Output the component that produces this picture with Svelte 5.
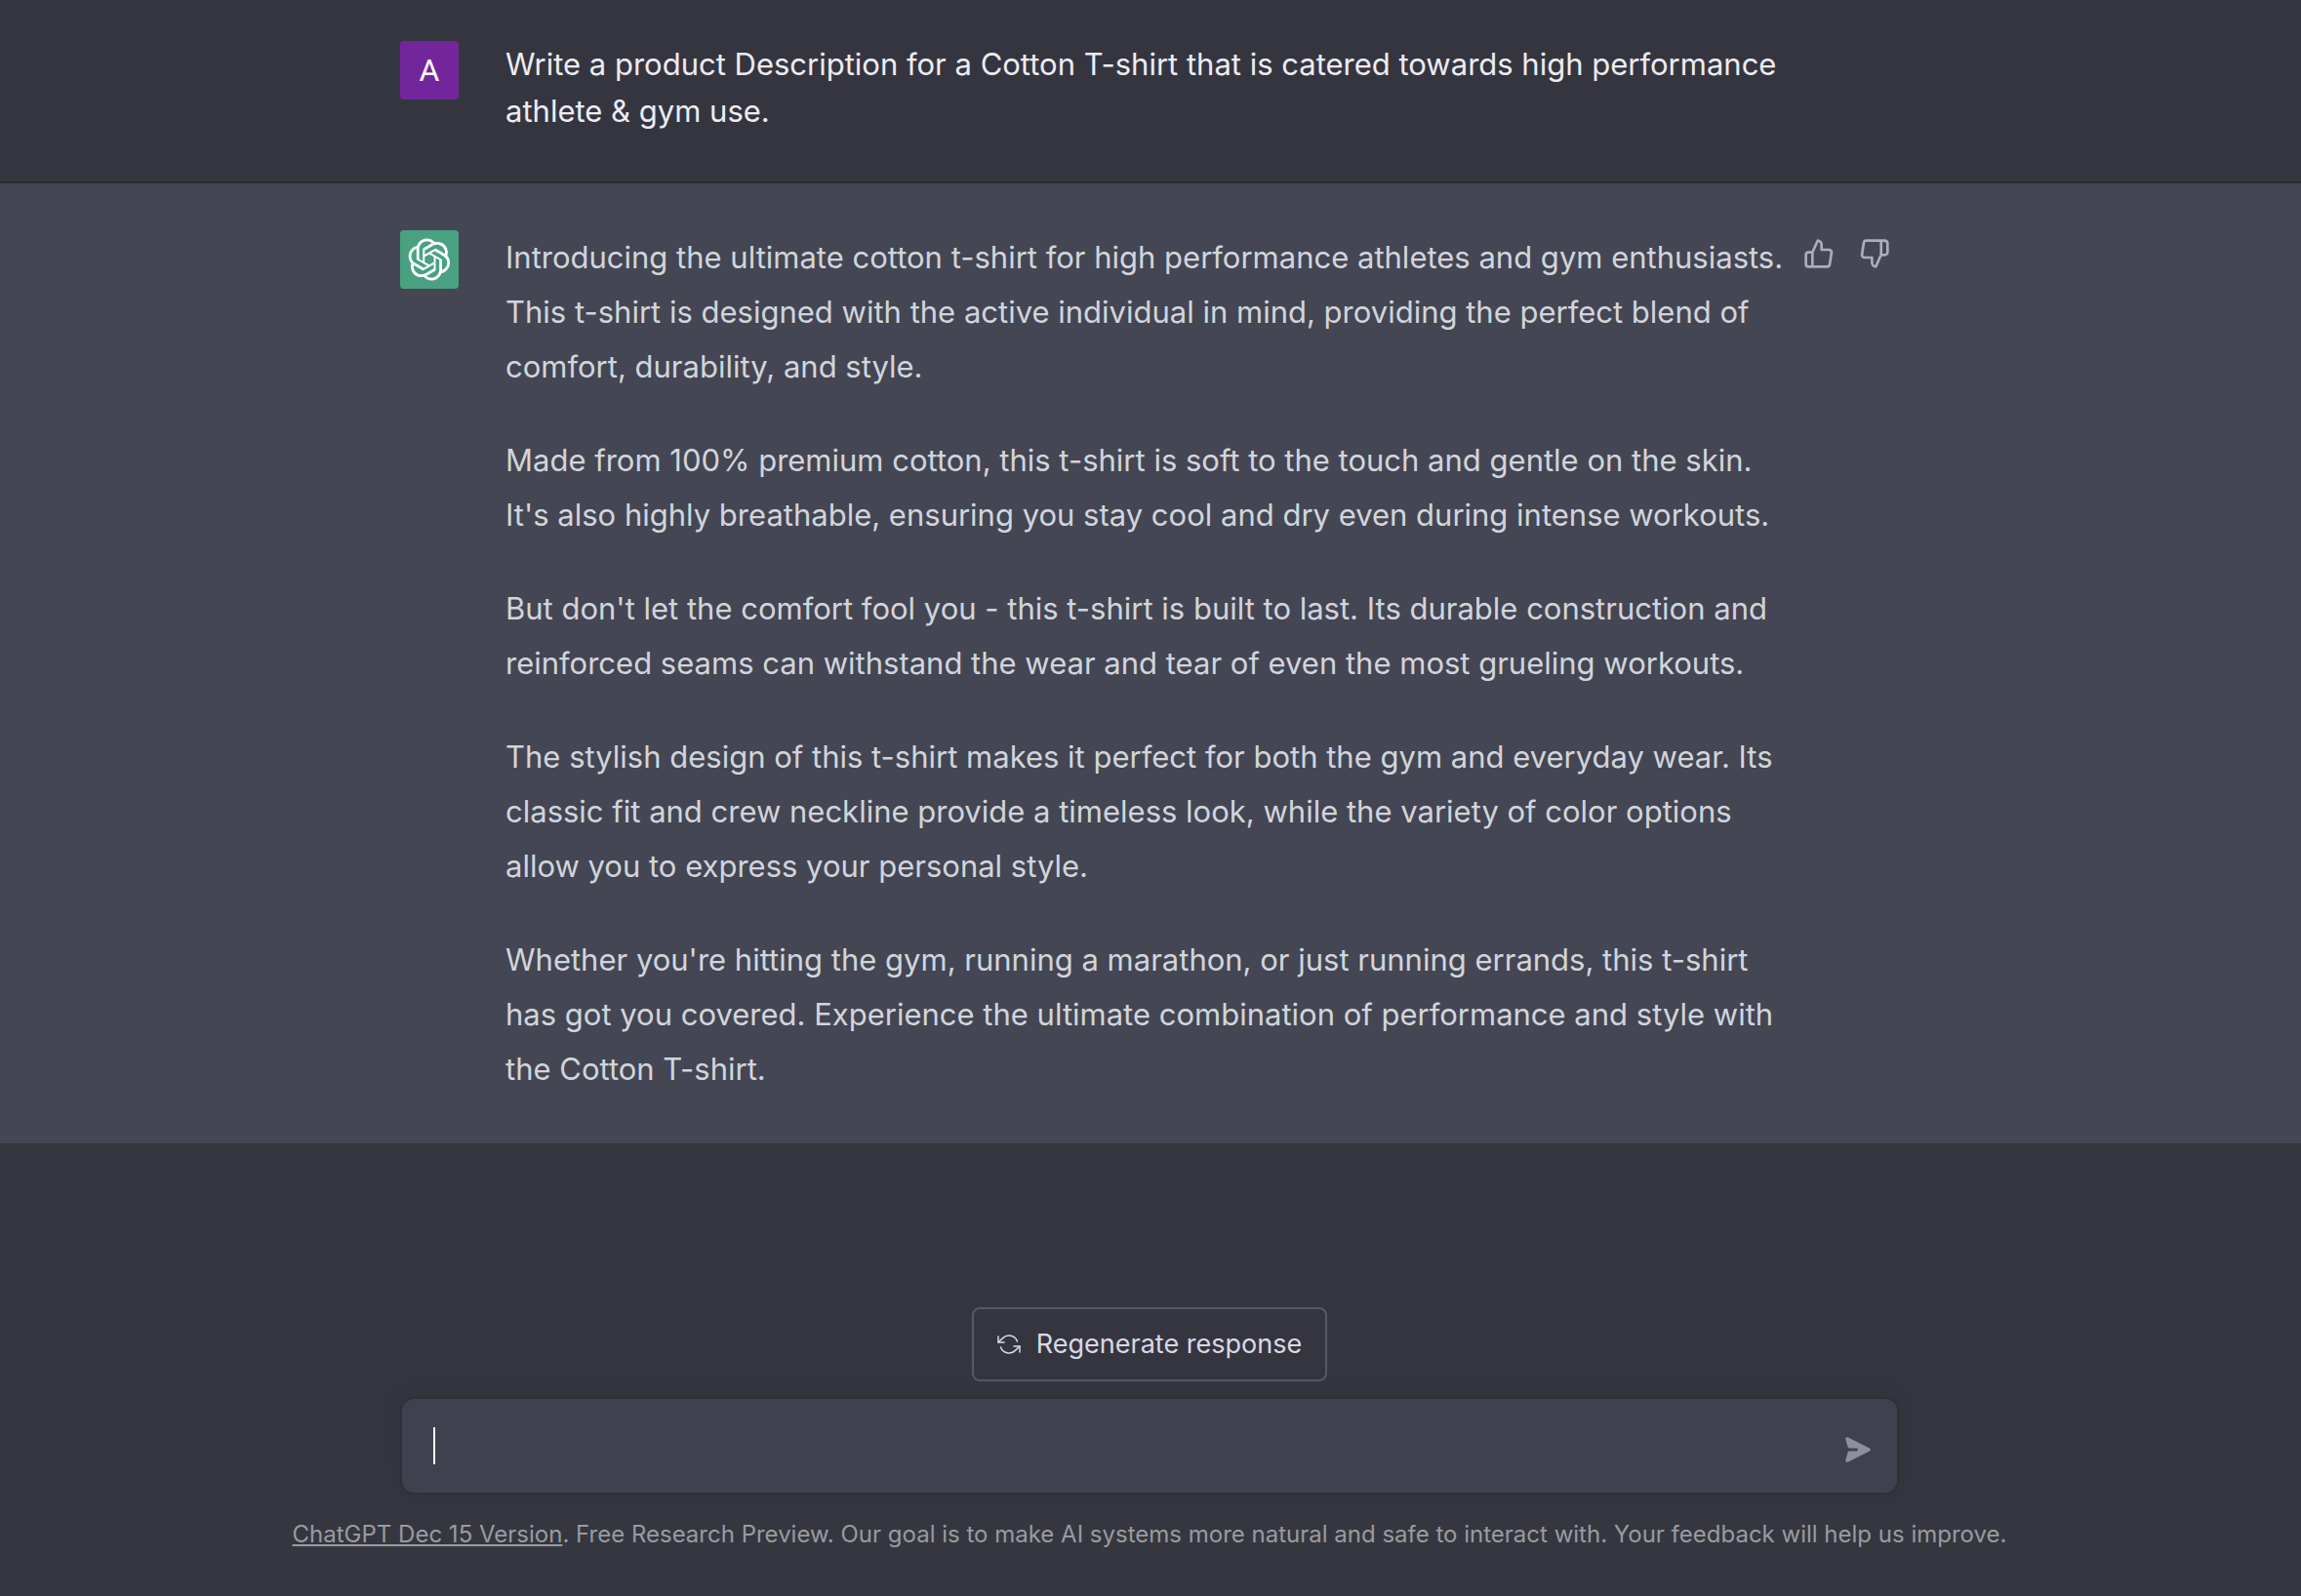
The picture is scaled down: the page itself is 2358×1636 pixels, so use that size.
<script lang="ts">
	const prompt =
		'Write a product Description for a Cotton T-shirt that is catered towards high performance athlete & gym use.';

	const answer = [
		'Introducing the ultimate cotton t-shirt for high performance athletes and gym enthusiasts. This t-shirt is designed with the active individual in mind, providing the perfect blend of comfort, durability, and style.',
		"Made from 100% premium cotton, this t-shirt is soft to the touch and gentle on the skin. It's also highly breathable, ensuring you stay cool and dry even during intense workouts.",
		"But don't let the comfort fool you - this t-shirt is built to last. Its durable construction and reinforced seams can withstand the wear and tear of even the most grueling workouts.",
		'The stylish design of this t-shirt makes it perfect for both the gym and everyday wear. Its classic fit and crew neckline provide a timeless look, while the variety of color options allow you to express your personal style.',
		"Whether you're hitting the gym, running a marathon, or just running errands, this t-shirt has got you covered. Experience the ultimate combination of performance and style with the Cotton T-shirt."
	];

	let message = $state('');
	let vote = $state<'up' | 'down' | null>(null);
</script>

<div class="page">
	<main>
		<article class="message user">
			<div class="column">
				<div class="avatar">A</div>
				<p class="text">{prompt}</p>
			</div>
		</article>

		<article class="message assistant">
			<div class="column">
				<div class="avatar">
					<svg class="logo" viewBox="0 0 41 41" fill="currentColor" aria-hidden="true">
						<path d="M37.5324 16.8707C37.9808 15.5241 38.1363 14.0974 37.9886 12.6859C37.8409 11.2744 37.3934 9.91076 36.676 8.68622C35.6126 6.83404 33.9882 5.3676 32.0373 4.4985C30.0864 3.62941 27.9098 3.40259 25.8215 3.85078C24.8796 2.7893 23.7219 1.94125 22.4257 1.36341C21.1295 0.785575 19.7249 0.491269 18.3058 0.500197C16.1708 0.495044 14.0893 1.16803 12.3614 2.42214C10.6335 3.67624 9.34853 5.44666 8.6917 7.47815C7.30085 7.76286 5.98686 8.3414 4.8377 9.17505C3.68854 10.0087 2.73073 11.0782 2.02839 12.312C0.956464 14.1591 0.498905 16.2988 0.721698 18.4228C0.944492 20.5467 1.83612 22.5449 3.268 24.1293C2.81966 25.4759 2.66413 26.9026 2.81182 28.3141C2.95951 29.7256 3.40701 31.0892 4.12437 32.3138C5.18791 34.1659 6.8123 35.6322 8.76321 36.5013C10.7141 37.3704 12.8907 37.5973 14.9789 37.1492C15.9208 38.2107 17.0786 39.0587 18.3747 39.6366C19.6709 40.2144 21.0755 40.5087 22.4946 40.4998C24.6307 40.5054 26.7133 39.8321 28.4418 38.5772C30.1704 37.3223 31.4556 35.5506 32.1119 33.5179C33.5027 33.2332 34.8167 32.6547 35.9659 31.821C37.115 30.9874 38.0728 29.9178 38.7752 28.684C39.8458 26.8371 40.3023 24.6979 40.0789 22.5748C39.8556 20.4517 38.9639 18.4544 37.5324 16.8707ZM22.4978 37.8849C20.7443 37.8874 19.0459 37.2733 17.6994 36.1501C17.7601 36.117 17.8666 36.0586 17.936 36.0161L25.9004 31.4156C26.1003 31.3019 26.2663 31.137 26.3813 30.9378C26.4964 30.7386 26.5563 30.5124 26.5549 30.2825V19.0542L29.9213 20.998C29.9389 21.0068 29.9541 21.0198 29.9656 21.0359C29.977 21.052 29.9842 21.0707 29.9867 21.0902V30.3889C29.9842 32.375 29.1946 34.2791 27.7909 35.6841C26.3872 37.0892 24.4838 37.8806 22.4978 37.8849ZM6.39227 31.0064C5.51397 29.4888 5.19742 27.7107 5.49804 25.9832C5.55718 26.0187 5.66048 26.0818 5.73461 26.1244L13.699 30.7248C13.8975 30.8408 14.1233 30.902 14.3532 30.902C14.583 30.902 14.8088 30.8408 15.0073 30.7248L24.731 25.1103V28.9979C24.7321 29.0177 24.7283 29.0376 24.7199 29.0556C24.7115 29.0736 24.6988 29.0893 24.6829 29.1012L16.6317 33.7497C14.9096 34.7416 12.8643 35.0097 10.9447 34.4954C9.02506 33.9811 7.38785 32.7263 6.39227 31.0064ZM4.29707 13.6194C5.17156 12.0998 6.55279 10.9364 8.19885 10.3327C8.19885 10.4013 8.19491 10.5228 8.19491 10.6071V19.808C8.19351 20.0378 8.25334 20.2638 8.36823 20.4629C8.48312 20.6619 8.64893 20.8267 8.84863 20.9404L18.5723 26.5542L15.206 28.4979C15.1894 28.5089 15.1703 28.5155 15.1505 28.5173C15.1307 28.5191 15.1107 28.516 15.0924 28.5082L7.04046 23.8557C5.32135 22.8601 4.06716 21.2235 3.55289 19.3046C3.03862 17.3858 3.30624 15.3413 4.29707 13.6194ZM31.955 20.0556L22.2312 14.4411L25.5976 12.4981C25.6142 12.4872 25.6333 12.4805 25.6531 12.4787C25.6729 12.4769 25.6928 12.4801 25.7111 12.4879L33.7631 17.1364C34.9967 17.849 36.0017 18.8982 36.6606 20.1613C37.3194 21.4244 37.6047 22.849 37.4832 24.2684C37.3617 25.6878 36.8382 27.0432 35.9743 28.1759C35.1103 29.3086 33.9415 30.1717 32.6047 30.6641C32.6047 30.5947 32.6047 30.4733 32.6047 30.3889V21.188C32.6066 20.9586 32.5474 20.7328 32.4332 20.5338C32.319 20.3348 32.154 20.1698 31.955 20.0556ZM35.3055 15.0128C35.2464 14.9765 35.1431 14.9142 35.069 14.8717L27.1045 10.2712C26.906 10.1554 26.6803 10.0943 26.4504 10.0943C26.2206 10.0943 25.9948 10.1554 25.7963 10.2712L16.0726 15.8858V11.9982C16.0715 11.9783 16.0753 11.9585 16.0837 11.9405C16.0921 11.9225 16.1048 11.9068 16.1207 11.8949L24.1719 7.25025C25.4053 6.53903 26.8158 6.19376 28.2383 6.25482C29.6608 6.31589 31.0364 6.78077 32.2044 7.59508C33.3723 8.40939 34.2842 9.53945 34.8334 10.8531C35.3826 12.1667 35.5464 13.6095 35.3055 15.0128ZM14.2424 21.9419L10.8752 19.9981C10.8576 19.9893 10.8423 19.9763 10.8309 19.9602C10.8195 19.9441 10.8122 19.9254 10.8098 19.9058V10.6071C10.8107 9.18295 11.2173 7.78848 11.9819 6.58696C12.7466 5.38544 13.8377 4.42659 15.1275 3.82264C16.4173 3.21869 17.8524 2.99464 19.2649 3.1767C20.6775 3.35876 22.0089 3.93941 23.1034 4.85067C23.0427 4.88379 22.937 4.94215 22.8668 4.98473L14.9024 9.58517C14.7025 9.69878 14.5366 9.86356 14.4215 10.0626C14.3065 10.2616 14.2466 10.4877 14.2479 10.7175L14.2424 21.9419ZM16.071 17.9991L20.4018 15.4978L24.7325 17.9975V22.9985L20.4018 25.4983L16.071 22.9985V17.9991Z" />
					</svg>
				</div>
				<div class="text">
					{#each answer as paragraph}
						<p>{paragraph}</p>
					{/each}
				</div>
				<div class="votes">
					<button
						type="button"
						aria-label="Good response"
						aria-pressed={vote === 'up'}
						onclick={() => (vote = 'up')}
					>
						<svg class="icon" viewBox="0 0 24 24" aria-hidden="true">
							<path d="M14 9V5a3 3 0 0 0-3-3l-4 9v11h11.28a2 2 0 0 0 2-1.7l1.38-9a2 2 0 0 0-2-2.3zM7 22H4a2 2 0 0 1-2-2v-7a2 2 0 0 1 2-2h3" />
						</svg>
					</button>
					<button
						type="button"
						aria-label="Bad response"
						aria-pressed={vote === 'down'}
						onclick={() => (vote = 'down')}
					>
						<svg class="icon" viewBox="0 0 24 24" aria-hidden="true">
							<path d="M10 15v4a3 3 0 0 0 3 3l4-9V2H5.72a2 2 0 0 0-2 1.7l-1.38 9a2 2 0 0 0 2 2.3zm7-13h2.67A2.31 2.31 0 0 1 22 4v7a2.31 2.31 0 0 1-2.33 2H17" />
						</svg>
					</button>
				</div>
			</div>
		</article>
	</main>

	<footer>
		<form onsubmit={(e) => e.preventDefault()}>
			<button type="button" class="regenerate">
				<svg class="refresh" viewBox="0 0 24 24" aria-hidden="true">
					<polyline points="1 4 1 10 7 10" />
					<polyline points="23 20 23 14 17 14" />
					<path d="M20.49 9A9 9 0 0 0 5.64 5.64L1 10m22 4l-4.64 4.36A9 9 0 0 1 3.51 15" />
				</svg>
				Regenerate response
			</button>

			<div class="composer">
				<textarea rows="1" aria-label="Message" bind:value={message}></textarea>
				{#if !message}
					<span class="caret"></span>
				{/if}
				<button type="submit" class="send" aria-label="Send message">
					<svg viewBox="0 0 20 20" fill="currentColor" aria-hidden="true">
						<path
							transform="rotate(90 10 10)"
							d="M10.894 2.553a1 1 0 00-1.788 0l-7 14a1 1 0 001.169 1.409l5-1.429A1 1 0 009 15.571V11a1 1 0 112 0v4.571a1 1 0 00.725.962l5 1.428a1 1 0 001.17-1.408l-7-14z"
						/>
					</svg>
				</button>
			</div>
		</form>

		<p class="notice">
			<a href="#release-notes">ChatGPT Dec 15 Version</a>. Free Research Preview. Our goal is to make
			AI systems more natural and safe to interact with. Your feedback will help us improve.
		</p>
	</footer>
</div>

<style>
	:global(body) {
		background: #353540;
	}

	.page {
		display: flex;
		flex-direction: column;
		min-height: 100vh;
		font-family: Inter, 'Liberation Sans', sans-serif;
		font-size: 31px;
		color: #ececf1;
	}

	p {
		margin: 0;
	}

	button {
		font: inherit;
		border: 0;
		background: none;
		cursor: pointer;
	}

	svg {
		display: block;
	}

	.message {
		padding: 48px 2px 48px 0;
		border-bottom: 2px solid #2b2b34;
	}

	.user {
		padding-top: 42px;
		line-height: 48px;
	}

	.assistant {
		background: #444653;
		border-color: #35353b;
		color: #d1d5db;
		line-height: 56px;
	}

	.column,
	form {
		box-sizing: border-box;
		max-width: 1536px;
		margin: 0 auto;
	}

	.column {
		display: flex;
		align-items: flex-start;
	}

	.avatar {
		display: flex;
		flex: none;
		align-items: center;
		justify-content: center;
		width: 60px;
		height: 60px;
		margin-right: 48px;
		border-radius: 4px;
		color: #fff;
	}

	.user .avatar {
		background: #73269b;
		font-family: Roboto, sans-serif;
		font-size: 32px;
	}

	.assistant .avatar {
		background: #4aa181;
	}

	.logo {
		width: 44px;
		height: 44px;
	}

	.text {
		flex: 1;
		max-width: 1322px;
	}

	.text p + p {
		margin-top: 40px;
	}

	.votes {
		display: flex;
		gap: 9px;
		padding-right: 1px;
		color: #acacbe;
	}

	.votes button {
		padding: 8px;
		color: inherit;
	}

	.icon {
		width: 32px;
		height: 32px;
		fill: none;
		stroke: currentColor;
		stroke-width: 2;
		stroke-linecap: round;
		stroke-linejoin: round;
	}

	footer {
		margin-top: auto;
		padding: 0 2px 47px 0;
		background: linear-gradient(#353540, #353740);
	}

	form {
		display: flex;
		flex-direction: column;
		align-items: center;
		gap: 18px;
		padding: 0 2px;
	}

	.regenerate {
		display: flex;
		align-items: center;
		gap: 16px;
		padding: 16px 24px;
		border: 2px solid #565869;
		border-radius: 8px;
		background: #353540;
		color: #d9d9e3;
		font-size: 27px;
		line-height: 40px;
	}

	.refresh {
		width: 24px;
		height: 24px;
		fill: none;
		stroke: currentColor;
		stroke-width: 1.5;
		stroke-linecap: round;
		stroke-linejoin: round;
	}

	.composer {
		position: relative;
		display: flex;
		align-items: center;
		align-self: stretch;
		box-sizing: border-box;
		height: 96px;
		padding: 0 24px 0 32px;
		border-radius: 12px;
		background: #40414e;
		box-shadow:
			0 0 0 2px rgba(32, 33, 35, 0.2),
			0 0 30px rgba(0, 0, 0, 0.1);
	}

	textarea {
		flex: 1;
		height: 48px;
		padding: 0;
		border: 0;
		outline: 0;
		background: transparent;
		color: #fff;
		font: inherit;
		line-height: 48px;
		resize: none;
	}

	.caret {
		position: absolute;
		top: 29px;
		left: 32px;
		width: 2px;
		height: 38px;
		background: #fff;
	}

	.composer:has(textarea:focus) .caret {
		display: none;
	}

	.send {
		margin-top: 8px;
		padding: 0;
		color: #8e8ea0;
	}

	.send svg {
		width: 32px;
		height: 32px;
	}

	.notice {
		padding-top: 27px;
		color: #9a9b9f;
		font-size: 24px;
		line-height: 32px;
		text-align: center;
	}

	.notice a {
		color: inherit;
		text-decoration: underline;
		text-decoration-thickness: 2px;
		text-underline-offset: 2px;
	}
</style>
